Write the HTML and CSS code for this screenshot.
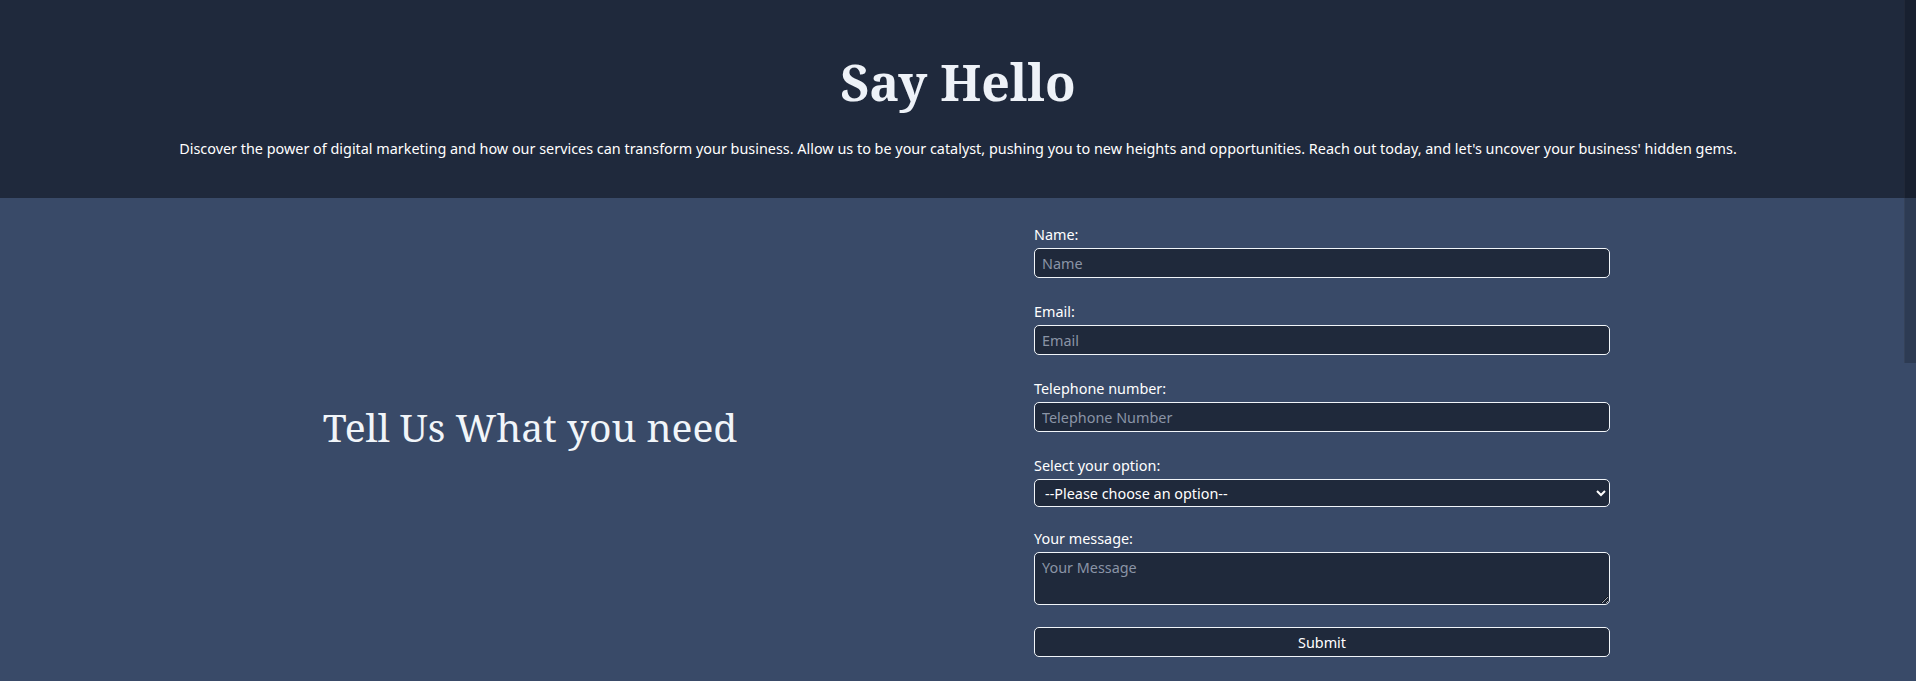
FILE: index.html
```html
<!DOCTYPE html>
<html lang="en">
<head>
<meta charset="utf-8">
<title>Say Hello</title>
<link rel="stylesheet" href="styles.css">
</head>
<body>
<header class="hero">
  <h1 class="hero-title">Say Hello</h1>
  <p class="hero-text">Discover the power of digital marketing and how our services can transform your business. Allow us to be your catalyst, pushing you to new heights and opportunities. Reach out today, and let's uncover your business' hidden gems.</p>
</header>
<main class="contact">
  <div class="contact-intro">
    <h2 class="contact-title">Tell Us What you need</h2>
  </div>
  <form class="contact-form">
    <div class="field">
      <label class="field-label" for="name">Name:</label>
      <input class="field-input" id="name" type="text" placeholder="Name">
    </div>
    <div class="field">
      <label class="field-label" for="email">Email:</label>
      <input class="field-input" id="email" type="email" placeholder="Email">
    </div>
    <div class="field">
      <label class="field-label" for="tel">Telephone number:</label>
      <input class="field-input" id="tel" type="tel" placeholder="Telephone Number">
    </div>
    <div class="field field-tight">
      <label class="field-label" for="option">Select your option:</label>
      <select class="field-select" id="option">
        <option>--Please choose an option--</option>
      </select>
    </div>
    <div class="field field-last">
      <label class="field-label" for="message">Your message:</label>
      <textarea class="field-textarea" id="message" placeholder="Your Message"></textarea>
    </div>
    <button class="submit-btn" type="submit">Submit</button>
  </form>
</main>
<div class="scroll-thumb"></div>
</body>
</html>
```

FILE: styles.css
```css
html, body {
  margin: 0;
  padding: 0;
  height: 100%;
  overflow: hidden;
}

body {
  background: #394a68;
  color: #f8fafc;
  font-family: "Noto Sans", "Open Sans", sans-serif;
  position: relative;
}

.hero {
  background: #1f293c;
  height: 198px;
  box-sizing: border-box;
  padding-top: 52px;
  text-align: center;
}

.hero-title {
  margin: 0;
  font-family: "Noto Serif", "DejaVu Serif", serif;
  font-weight: 700;
  font-size: 50px;
  line-height: 60px;
  color: #eef2f8;
}

.hero-text {
  margin: 26px 0 0;
  font-size: 14.4px;
  line-height: 21px;
  color: #ffffff;
}

.contact {
  display: flex;
  height: 483px;
}

.contact-intro {
  flex: 0 0 1034px;
  box-sizing: border-box;
  padding-left: 26px;
  padding-bottom: 26px;
  display: flex;
  align-items: center;
  justify-content: center;
}

.contact-title {
  margin: 0;
  font-family: "Noto Serif", "DejaVu Serif", serif;
  font-weight: 400;
  font-size: 39px;
  line-height: 48px;
  color: #f1f5f9;
}

.contact-form {
  width: 576px;
  padding-top: 26px;
  color-scheme: dark;
}

.field {
  margin-bottom: 23px;
}

.field-tight {
  margin-bottom: 21px;
}

.field-last {
  margin-bottom: 22px;
}

.field-label {
  display: block;
  font-size: 14.4px;
  line-height: 21px;
  margin-bottom: 3px;
  color: #ffffff;
}

.field-input,
.field-select,
.field-textarea,
.submit-btn {
  display: block;
  width: 100%;
  box-sizing: border-box;
  background: #1f293b;
  border: 1px solid #f1f5f9;
  border-radius: 5px;
  color: #ffffff;
  font-family: "Noto Sans", "Open Sans", sans-serif;
  font-size: 14.4px;
  margin: 0;
}

.field-input {
  height: 30px;
  padding: 0 7px;
}

.field-input::placeholder,
.field-textarea::placeholder {
  color: #8a94a6;
}

.field-select {
  height: 28px;
  padding: 0 6px;
}

.field-textarea {
  height: 53px;
  padding: 5px 7px 3px;
  resize: vertical;
}

.submit-btn {
  height: 30px;
  text-align: center;
  cursor: pointer;
}

.scroll-thumb {
  position: absolute;
  top: 0;
  right: 0;
  width: 11px;
  height: 363px;
  background: rgba(0, 0, 0, 0.2);
  border-left: 1px solid rgba(255, 255, 255, 0.04);
}
```
